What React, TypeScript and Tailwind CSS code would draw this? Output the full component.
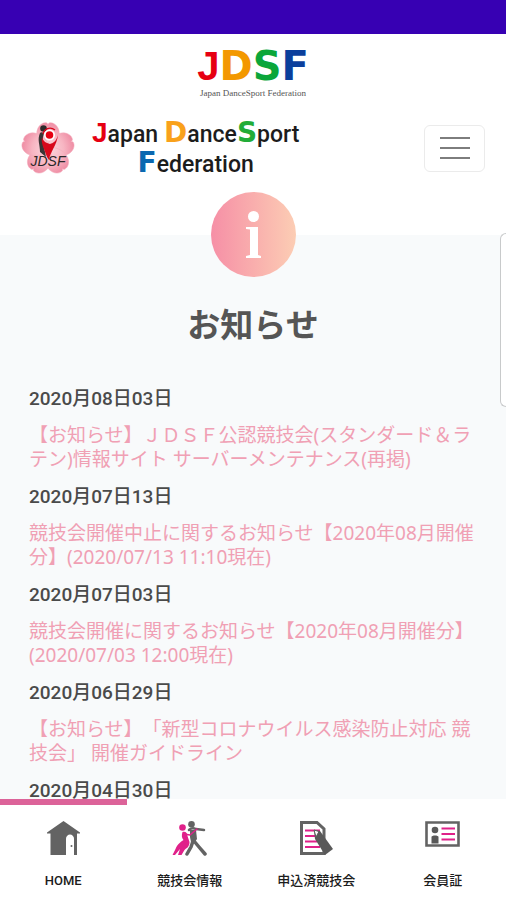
import React from 'react';

const NEWS = [
  {
    date: '2020月08日03日',
    title: '【お知らせ】ＪＤＳＦ公認競技会(スタンダード＆ラテン)情報サイト サーバーメンテナンス(再掲)',
  },
  {
    date: '2020月07日13日',
    title: '競技会開催中止に関するお知らせ【2020年08月開催分】(2020/07/13 11:10現在)',
  },
  {
    date: '2020月07日03日',
    title: '競技会開催に関するお知らせ【2020年08月開催分】(2020/07/03 12:00現在)',
  },
  {
    date: '2020月06日29日',
    title: '【お知らせ】「新型コロナウイルス感染防止対応 競技会」 開催ガイドライン',
  },
  { date: '2020月04日30日', title: '' },
];

const TABS = [
  { label: 'HOME', icon: <HomeIcon />, active: true },
  { label: '競技会情報', icon: <DancersIcon />, active: false },
  { label: '申込済競技会', icon: <EntryIcon />, active: false },
  { label: '会員証', icon: <CardIcon />, active: false },
];

export default function App() {
  return (
    <div className="relative h-screen flex flex-col overflow-hidden bg-white font-['Roboto','Noto_Sans_CJK_JP',sans-serif] [text-spacing-trim:space-all]">
      <div className="h-[34px] shrink-0 bg-[#3700b3]" />

      <header className="shrink-0">
        <AppLogo />
        <div className="flex items-center justify-between pl-5 pr-[21px] pt-[18px]">
          <a href="#top" className="flex items-center gap-4">
            <SakuraEmblem />
            <Wordmark />
          </a>
          <button
            type="button"
            aria-label="メニュー"
            className="flex h-[47px] w-[61px] flex-col items-center justify-center gap-2 rounded-md border border-[#ebebeb]"
          >
            <span className="h-0.5 w-[30px] bg-[#7d7d7d]" />
            <span className="h-0.5 w-[30px] bg-[#7d7d7d]" />
            <span className="h-0.5 w-[30px] bg-[#7d7d7d]" />
          </button>
        </div>
      </header>

      <main className="mt-[57px] min-h-0 flex-1 bg-[#f8fafb]">
        <div className="relative -mt-[43px] flex flex-col items-center">
          <InfoBadge />
          <h1 className="mt-6 text-[33px] font-bold leading-[50px] text-[#555]">お知らせ</h1>
          <NewsList />
        </div>
      </main>

      {/* edge panel handle */}
      <div className="absolute right-0 top-[233px] h-[174px] w-1.5 rounded-l-lg border border-r-0 border-[#c8cacb] bg-white" />

      <BottomNav />
    </div>
  );
}

function AppLogo() {
  return (
    <div className="flex flex-col items-center pt-3">
      <div className="flex items-baseline font-['DejaVu_Sans',sans-serif] text-[40px] font-bold leading-10">
        <span className="font-['Liberation_Sans',sans-serif] text-[#e60012]">J</span>
        <span className="text-[#f39800]">D</span>
        <span className="text-[#0ba63a]">S</span>
        <span className="text-[#0b3f9c]">F</span>
      </div>
      <p className="font-['Liberation_Serif',serif] text-[9px] leading-[14px] text-[#555]">Japan DanceSport Federation</p>
    </div>
  );
}

function Wordmark() {
  return (
    <span className="flex flex-col items-center text-[23px] font-medium leading-[30px] text-[#1c1c1c]">
      <span className="flex h-[30px] items-baseline">
        <b className="font-['Liberation_Sans',sans-serif] text-[28px] text-[#e60012]">J</b>
        <span>apan</span>
        <b className="ml-1.5 font-['DejaVu_Sans',sans-serif] text-[28px] text-[#f9a11b]">D</b>
        <span>ance</span>
        <b className="font-['DejaVu_Sans',sans-serif] text-[28px] text-[#22ac38]">S</b>
        <span>port</span>
      </span>
      <span className="flex h-[30px] items-baseline">
        <b className="font-['DejaVu_Sans',sans-serif] text-[28px] text-[#0b68b0]">F</b>
        <span>ederation</span>
      </span>
    </span>
  );
}

function SakuraEmblem() {
  const petal = 'M28 31C20 27 14 16 18 8c2-4 6-6 9-5l1 1.500 1-1.500c3-1 7 1 9 5 4 8-2 19-10 23z';
  return (
    <svg className="h-14 w-14" viewBox="0 0 56 56" aria-label="JDSF" role="img">
      <defs>
        <radialGradient id="petal" gradientUnits="userSpaceOnUse" cx="28" cy="30" r="28">
          <stop offset="0" stopColor="#fbdbe1" />
          <stop offset="0.6" stopColor="#f7b5c2" />
          <stop offset="1" stopColor="#ee8aa2" />
        </radialGradient>
      </defs>
      <g fill="url(#petal)" stroke="#f4a9b9" strokeWidth="0.5">
        <path d={petal} />
        <path d={petal} transform="rotate(72 28 29)" />
        <path d={petal} transform="rotate(144 28 29)" />
        <path d={petal} transform="rotate(216 28 29)" />
        <path d={petal} transform="rotate(288 28 29)" />
      </g>
      <circle cx="23.500" cy="8.500" r="3.300" fill="#2e2a2b" />
      <path d="M20 13c-3 7 0 11 0 19l6 5c-1-8-4-13-3-20l1-4c-2-1-3-1-4 0z" fill="#3a3536" />
      <path d="M22 17c-1 6 1 9 5 20l2 3c1-8 8-15 9-25-2 7-5 8-8 9-4-1-7-3-8-7z" fill="#d7081c" />
      <circle cx="29.500" cy="15" r="5.500" fill="#fff" />
      <circle cx="29.500" cy="15" r="3.800" fill="#e60012" />
      <path d="M23 14c1-5 7-8 12-4" fill="none" stroke="#d7081c" strokeWidth="1.300" />
      <text
        x="28"
        y="46"
        textAnchor="middle"
        fontSize="14"
        fontStyle="italic"
        fill="#2b2627"
        className="font-['Liberation_Sans',sans-serif]"
      >
        JDSF
      </text>
    </svg>
  );
}

function InfoBadge() {
  return (
    <svg className="size-[85px] shrink-0" viewBox="0 0 85 85" aria-hidden="true">
      <defs>
        <linearGradient id="badge" x1="0" y1="0" x2="1" y2="0">
          <stop offset="0" stopColor="#f68fa6" />
          <stop offset="1" stopColor="#fccdb4" />
        </linearGradient>
      </defs>
      <circle cx="42.5" cy="42.5" r="42.5" fill="url(#badge)" />
      <circle cx="42.5" cy="24.5" r="5.500" fill="#fff" />
      <path d="M35 35h12v28l3 1v2H35v-2l4-1V37.500l-4-.5z" fill="#fff" />
    </svg>
  );
}

function NewsList() {
  return (
    <ul className="mt-9 w-full px-[29px] text-[19px] leading-6">
      {NEWS.map((item) => (
        <li key={item.date} className="mb-[14px]">
          <p className="mb-3 font-medium text-[#4a4a4a]">{item.date}</p>
          {item.title && (
            <a href="#news" className="block font-['Noto_Sans','Noto_Sans_CJK_JP',sans-serif] text-[#f0a0b4]">
              {item.title}
            </a>
          )}
        </li>
      ))}
    </ul>
  );
}

function BottomNav() {
  return (
    <nav className="relative z-10 grid h-[101px] shrink-0 grid-cols-4 bg-white">
      {TABS.map((tab) => (
        <a key={tab.label} href="#tab" className="flex flex-col items-center text-[13px] font-medium text-[#1c1c1c]">
          <span className={tab.active ? 'h-1.5 w-full bg-[#dc6399]' : 'h-1.5 w-full'} />
          <span className="mt-4 h-[35px]">{tab.icon}</span>
          <span className="mt-[15px] leading-5">{tab.label}</span>
        </a>
      ))}
    </nav>
  );
}

function HomeIcon() {
  return (
    <svg className="size-[35px]" viewBox="0 0 35 35" fill="#636363">
      <path d="M17.500 0 34 11.500v1H31V34h-3V18c0-6-8-6-8 0v16H4.500V12.500H1v-1z" />
      <path d="M20.500 34V18c0-5 7-5 7 0v16z" fill="#fff" />
      <circle cx="25.500" cy="25" r="1" />
    </svg>
  );
}

function DancersIcon() {
  return (
    <svg className="size-[35px]" viewBox="0 0 35 35" fill="none" strokeLinecap="round" strokeLinejoin="round">
      <circle cx="10.500" cy="6.500" r="3.300" fill="#e0218a" />
      <path d="M10.500 11c3-1 5 1 5 4l2 6c0 5-3 6-5 8l-3 5H6l2-6-5 6H.5l3-6c2-5 5-7 8-9-2-2-2-5-1-8z" fill="#e0218a" />
      <circle cx="19.500" cy="3.300" r="3.300" fill="#636363" />
      <path d="M17 9c2-2 5-2 7-1l8 1" stroke="#636363" strokeWidth="2.500" />
      <path d="M18 9h6l1 9-2 3h-4l-1-5z" fill="#636363" />
      <path d="m21 20-2 6-4 7M22 20l5 6 6 7" stroke="#636363" strokeWidth="3.500" />
      <path d="m12 13 6 1 7-6" stroke="#e0218a" strokeWidth="1.500" />
    </svg>
  );
}

function EntryIcon() {
  return (
    <svg className="size-[35px]" viewBox="0 0 35 35" fill="none">
      <path d="M2.500 1.500H18l7 6.500v24.500H2.500z" stroke="#636363" strokeWidth="3" />
      <path d="M6 9.500h15M6 15h11M6 20.500h12M6 26h15" stroke="#e0218a" strokeWidth="2.200" />
      <path d="m15 9 6 1 13 18-8 6L16 18z" fill="#595959" />
      <path d="m15 9 5 1.500-3 5.500z" fill="#fff" stroke="#595959" />
    </svg>
  );
}

function CardIcon() {
  return (
    <svg className="size-[35px]" viewBox="0 0 35 35" fill="none">
      <path d="M1.500 1.500h32v23h-32z" stroke="#636363" strokeWidth="2.600" />
      <circle cx="10" cy="9" r="3.300" fill="#595959" />
      <path d="M6.500 22.500V16c0-2 7-2 7 0v6.500z" fill="#595959" />
      <path d="M16.500 7.500H30M16.500 13H30M16.500 18.500H30" stroke="#e0218a" strokeWidth="2.200" />
    </svg>
  );
}
